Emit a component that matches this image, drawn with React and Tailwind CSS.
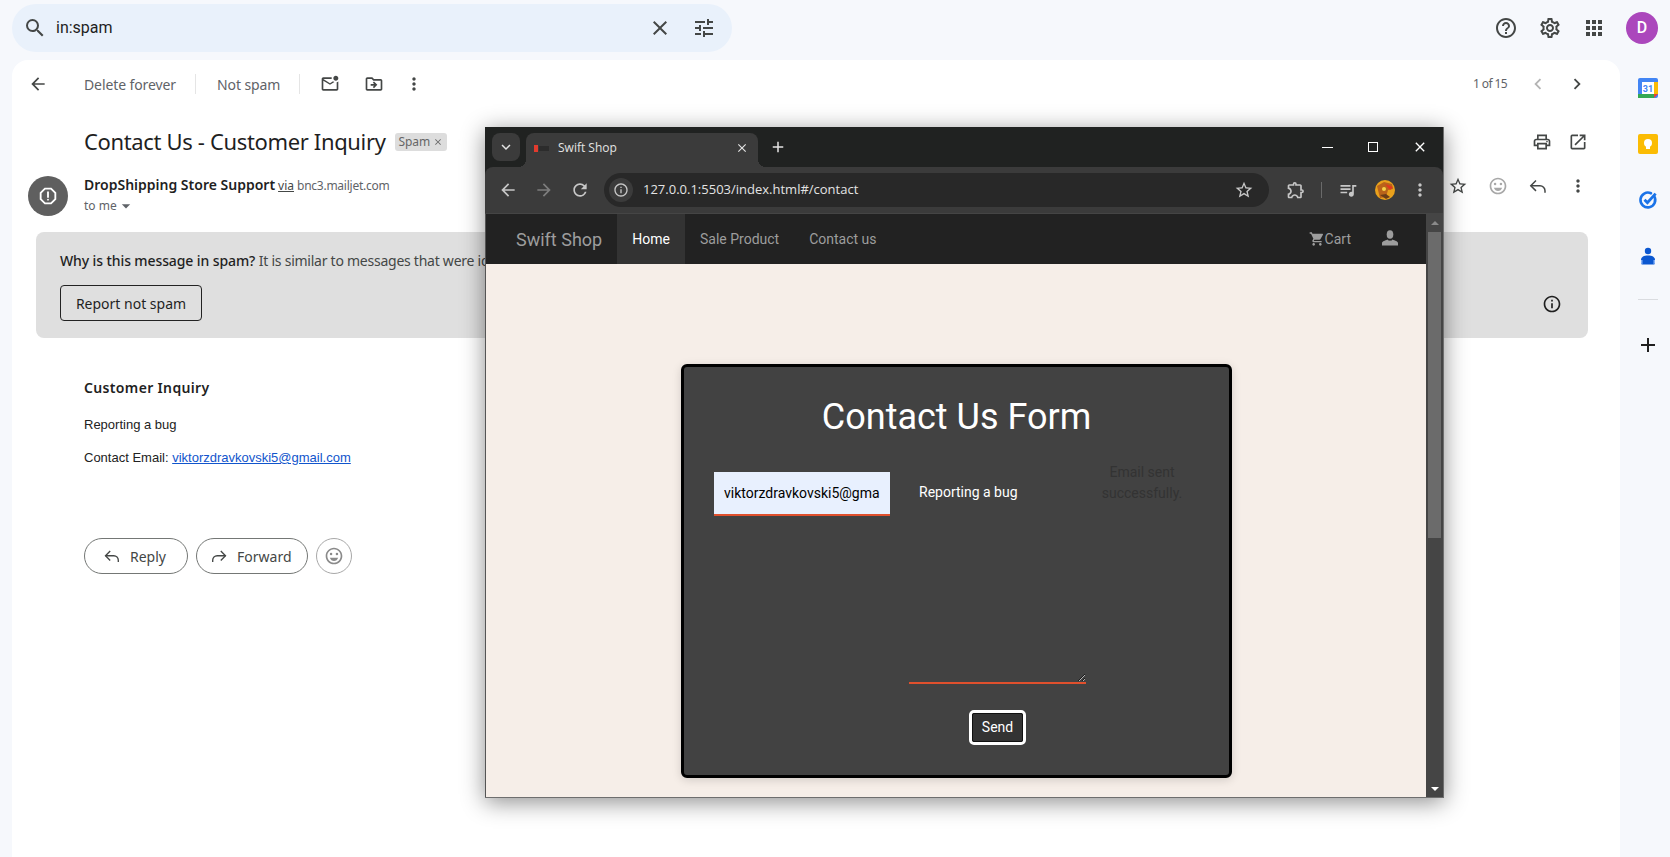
import React from "react";
import {
  MdSearch, MdClose, MdTune, MdHelpOutline, MdOutlineSettings, MdApps, MdArrowBack, MdMoreVert,
  MdOutlineMarkEmailUnread, MdOutlineDriveFileMove, MdOutlinePrint, MdOpenInNew, MdStarBorder,
  MdOutlineEmojiEmotions, MdChevronLeft, MdChevronRight, MdInfoOutline, MdAdd, MdArrowDropDown,
  MdOutlineReport, MdRefresh, MdArrowForward, MdOutlineExtension, MdQueueMusic, MdKeyboardArrowDown,
  MdShoppingCart,
} from "react-icons/md";

function ReplyIcon({ size = 20, className = "" }) {
  return (
    <svg width={size} height={size} viewBox="0 0 20 20" fill="none" stroke="currentColor" strokeWidth="1.5" className={className}>
      <path d="M8 4.500 2.800 9.700 8 14.900" />
      <path d="M2.800 9.700h9.200a5 5 0 0 1 5 5v2" />
    </svg>
  );
}
function UserGlyph() {
  return (
    <svg width="16" height="16" viewBox="0 0 16 16" fill="currentColor" className="ml-[31px] mr-[28px] -mt-[2px]">
      <ellipse cx="8" cy="4.500" rx="3.300" ry="4.300" />
      <path d="M0 15.500v-2.500c0-1.500 3-2.500 5.500-3.500.5.800 1.500 1.200 2.500 1.200s2-.4 2.500-1.200c2.500 1 5.500 2 5.500 3.500v2.500z" />
    </svg>
  );
}
function Calendar() {
  return (
    <svg width="20" height="20" viewBox="0 0 20 20">
      <rect x="0" y="0" width="20" height="20" rx="2" fill="#4285f4" />
      <rect x="4" y="4" width="12" height="12" fill="#fff" />
      <rect x="0" y="16" width="16" height="4" fill="#34a853" />
      <rect x="16" y="4" width="4" height="12" fill="#fbbc04" />
      <path d="M16 16h4l-4 4z" fill="#ea4335" />
      <text x="10" y="13.800" textAnchor="middle" fontSize="9" fontWeight="700" fill="#4285f4" fontFamily="Roboto, sans-serif">31</text>
    </svg>
  );
}
function Keep() {
  return (
    <svg width="20" height="20" viewBox="0 0 20 20">
      <rect width="20" height="20" rx="2" fill="#fbbc04" />
      <circle cx="10" cy="9" r="4" fill="#fff" />
      <rect x="8" y="12" width="4" height="3" fill="#fff" />
    </svg>
  );
}
function Tasks() {
  return (
    <svg width="20" height="20" viewBox="0 0 20 20" fill="none">
      <path d="M16.200 6.200A7.400 7.400 0 1 1 13 3.300" stroke="#1a73e8" strokeWidth="2.600" strokeLinecap="round" />
      <path d="M6.500 9.700 9.400 12.600 17.600 3.600" stroke="#1a73e8" strokeWidth="2.800" />
    </svg>
  );
}
function Contacts() {
  return (
    <svg width="20" height="20" viewBox="0 0 20 20">
      <circle cx="10" cy="5" r="3.200" fill="#0b57d0" />
      <path d="M3 17v-3.200C3 11 6 9.500 10 9.500s7 1.500 7 4.300V17a1.500 1.500 0 0 1-1.500 1.500h-11A1.500 1.500 0 0 1 3 17z" fill="#0b57d0" />
      <path d="M3 14h1.500v4H4a1 1 0 0 1-1-1zM17 14h-1.500v4h.5a1 1 0 0 0 1-1z" fill="#8ab4f8" />
    </svg>
  );
}
function Mascot() {
  return (
    <svg width="20" height="20" viewBox="0 0 20 20" className="block">
      <circle cx="10" cy="10" r="10" fill="#e9a11c" />
      <path d="M2 6 9 2l8 2 1 5-5 1-2 7-6 1z" fill="#b9631a" />
      <path d="M10 4l8 3-3 3z" fill="#e2371f" />
      <circle cx="9" cy="9" r="2" fill="#f7d348" />
      <path d="M5 15l6 4 4-2-4-3z" fill="#6b3d17" />
    </svg>
  );
}

function GmailTopBar() {
  return (
    <header className="h-[60px] shrink-0 flex items-center pl-3 pr-[12px]">
      <div className="w-[720px] h-12 -mt-[4px] rounded-full bg-[#e9f1fb] flex items-center pl-[12px] pr-[16px] text-[#444746]">
        <MdSearch size={24} className="shrink-0 -ml-[1px]" />
        <span className="ml-[9px] text-[16px] text-[#1f1f1f] font-['Roboto',sans-serif]">in:spam</span>
        <MdClose size={24} className="ml-auto" />
        <MdTune size={24} className="ml-[20px]" />
      </div>
      <div className="ml-auto -mt-[4px] flex items-center text-[#444746]">
        <MdHelpOutline size={24} />
        <MdOutlineSettings size={24} className="ml-[20px]" />
        <MdApps size={24} className="ml-[20px]" />
        <div className="ml-[20px] w-8 h-8 rounded-full bg-[#ab47bc] text-white flex items-center justify-center text-[16px] font-medium font-['Roboto',sans-serif]">D</div>
      </div>
    </header>
  );
}

function MessageCard() {
  return (
    <main className="w-[1608px] rounded-t-2xl bg-white text-[#444746] font-['Noto_Sans',sans-serif]">
      <div className="h-12 flex items-center pl-[16px] pr-[32px]">
        <MdArrowBack size={20} className="ml-0 text-[#444746]" />
        <span className="ml-[36px] text-[14px] tracking-[-0.1px] text-[#5f6368]">Delete forever</span>
        <span className="ml-[19px] w-px h-5 bg-[#e5e5e5]" />
        <span className="ml-[21px] text-[14px] tracking-[-0.1px] text-[#5f6368]">Not spam</span>
        <span className="ml-[19px] w-px h-5 bg-[#e5e5e5]" />
        <MdOutlineMarkEmailUnread size={20} className="ml-[20px]" />
        <MdOutlineDriveFileMove size={20} className="ml-[24px]" />
        <MdMoreVert size={20} className="ml-[20px]" />
        <span className="ml-auto text-[12px] tracking-[-0.6px] text-[#5f6368]">1 of 15</span>
        <MdChevronLeft size={22} className="ml-[20px] text-[#b4b4b4]" />
        <MdChevronRight size={22} className="ml-[17px] text-[#444746]" />
      </div>
      <div className="mt-[17px] h-[34px] flex items-center pl-[72px] pr-[32px]">
        <h1 className="-mt-[2px] text-[22px] tracking-[-0.35px] text-[#1f1f1f]">Contact Us - Customer Inquiry</h1>
        <span className="ml-[9px] h-[18px] px-1 rounded-[3px] bg-[#dddddd] flex items-center gap-[3px] text-[12px] tracking-[-0.1px] text-[#666666]">Spam <MdClose size={10} /></span>
        <MdOutlinePrint size={20} className="ml-auto" />
        <MdOpenInNew size={20} className="ml-[16px]" />
      </div>
      <div className="mt-[17px] h-10 flex pl-[16px] pr-[32px]">
        <div className="w-10 h-10 rounded-full bg-[#5f5f5f] text-white flex items-center justify-center">
          <MdOutlineReport size={22} />
        </div>
        <div className="ml-4 flex flex-col">
          <div className="flex items-baseline text-[14px] leading-[20px] -mt-[1px]">
            <span className="font-semibold text-[#1f1f1f]">DropShipping Store Support</span>
            <span className="ml-[3px] text-[12px] underline text-[#444746]">via</span>
            <span className="ml-[3px] text-[12px] tracking-[-0.25px] text-[#5f6368]">bnc3.mailjet.com</span>
          </div>
          <div className="flex items-center text-[12px] leading-[20px] text-[#5f6368]">
            to me <MdArrowDropDown size={20} className="-ml-[1px]" />
          </div>
        </div>
        <div className="ml-auto flex items-start pt-0 text-[#444746]">
          <MdStarBorder size={20} />
          <MdOutlineEmojiEmotions size={20} className="ml-[20px] text-[#a8a8a8]" />
          <ReplyIcon size={20} className="ml-[20px]" />
          <MdMoreVert size={20} className="ml-[20px]" />
        </div>
      </div>
      <section className="relative ml-[24px] mr-[32px] mt-4 h-[106px] rounded-lg bg-[#dfdfdf] pl-[24px] pt-[19px]">
        <p className="text-[14px] leading-5 tracking-[-0.1px] text-[#444746]">
          <span className="font-medium text-[#1f1f1f]">Why is this message in spam?</span> <span className="tracking-[-0.25px]">It is similar to messages that were identified as spam in the past.</span>
        </p>
        <button className="mt-[14px] w-[142px] h-9 rounded-[4px] border border-[#222] text-[14px] text-[#1f1f1f]">Report not spam</button>
        <MdInfoOutline size={20} className="absolute right-[26px] top-[62px] text-[#1f1f1f]" />
      </section>
      <div className="ml-[72px] mt-[38px] text-[#222] font-['Liberation_Sans',sans-serif]">
        <h2 className="text-[14px] leading-6 font-semibold tracking-[0.35px] font-['Noto_Sans',sans-serif] text-[#1f1f1f]">Customer Inquiry</h2>
        <p className="mt-[15px] text-[13px] leading-[20px]">Reporting a bug</p>
        <p className="mt-[13px] text-[13px] leading-[20px]">Contact Email: <a className="text-[#1155cc] underline">viktorzdravkovski5@gmail.com</a></p>
      </div>
      <div className="ml-[72px] mt-[70px] flex gap-2">
        <button className="w-[104px] h-9 rounded-full border border-[#747775] flex items-center pl-[18px] gap-[9px] text-[14px] text-[#444746]"><ReplyIcon size={18} />Reply</button>
        <button className="w-[112px] h-9 rounded-full border border-[#747775] flex items-center pl-[13px] gap-[9px] text-[14px] text-[#444746]"><ReplyIcon size={18} className="-scale-x-100" />Forward</button>
        <button className="w-9 h-9 rounded-full border border-[#a8a8a8] flex items-center justify-center text-[#8a8a8a]"><MdOutlineEmojiEmotions size={20} /></button>
      </div>
    </main>
  );
}

function RightRail() {
  return (
    <aside className="flex-1 flex flex-col items-center pl-[6px] pt-[18px]">
      <Calendar />
      <div className="mt-9"><Keep /></div>
      <div className="mt-9"><Tasks /></div>
      <div className="mt-9"><Contacts /></div>
      <div className="mt-[33px] w-5 h-px bg-[#dadce0]" />
      <MdAdd size={24} className="mt-[33px] text-[#1f1f1f]" />
    </aside>
  );
}

function BrowserChrome() {
  return (
    <>
      <div className="h-10 flex bg-[#202221] pl-[7px] pt-[6px] text-white font-['Open_Sans',sans-serif]">
        <div className="w-7 h-7 rounded-lg bg-[#3b3b3b] flex items-center justify-center text-[#e3e3e3]"><MdKeyboardArrowDown size={18} /></div>
        <div className="relative ml-[6px] w-[232px] h-[34px] rounded-t-lg bg-[#3b3b3b] flex items-center pl-2 pr-[8px] pb-[4px]">
          <span className="absolute -left-2 bottom-0 w-2 h-2 bg-[radial-gradient(circle_at_0_0,transparent_8px,#3b3b3b_8px)]" />
          <span className="absolute -right-2 bottom-0 w-2 h-2 bg-[radial-gradient(circle_at_100%_0,transparent_8px,#3b3b3b_8px)]" />
          <span className="flex items-center w-4 h-4">
            <span className="w-[4px] h-[7px] bg-[#e23b2e]" />
            <span className="ml-px w-[10px] h-[5px] bg-[#2c2c2c]" />
          </span>
          <span className="ml-[8px] text-[12px] text-[#e3e3e3]">Swift Shop</span>
          <MdClose size={14} className="ml-auto mr-[1px] text-[#e3e3e3]" />
        </div>
        <MdAdd size={18} className="ml-[11px] mt-[5px] text-[#e3e3e3]" />
        <div className="ml-auto flex -mt-[6px] h-10 items-center pr-[15px]">
          <span className="w-[11px] h-px bg-white mr-[35px]" />
          <span className="w-[10px] h-[10px] border border-white mr-[34px]" />
          <MdClose size={16} />
        </div>
      </div>
      <div className="h-[47px] bg-[#3b3b3b] rounded-t-lg flex items-center pl-[13px] text-[#c7c7c7] border-b border-[#454545] font-['Open_Sans',sans-serif]">
        <MdArrowBack size={20} />
        <MdArrowForward size={20} className="ml-[16px] text-[#7d7d7d]" />
        <MdRefresh size={20} className="ml-[16px]" />
        <div className="ml-[14px] w-[665px] h-[34px] rounded-full bg-[#282828] flex items-center pl-[5px] pr-[15px]">
          <span className="w-6 h-6 rounded-full bg-[#3b3b3b] flex items-center justify-center"><MdInfoOutline size={16} /></span>
          <span className="ml-[10px] text-[13px] text-[#e3e3e3]">127.0.0.1:5503/index.html#/contact</span>
          <MdStarBorder size={20} className="ml-auto" />
        </div>
        <MdOutlineExtension size={20} className="ml-[17px]" />
        <span className="ml-[15px] w-px h-4 bg-[#6a6a6a]" />
        <MdQueueMusic size={20} className="ml-[16px]" />
        <span className="ml-[17px]"><Mascot /></span>
        <MdMoreVert size={20} className="ml-[15px]" />
      </div>
    </>
  );
}

function ShopNav() {
  return (
    <nav className="h-[50px] shrink-0 bg-[#222222] flex items-center pl-[30px] text-[14px] text-[#9d9d9d]">
      <span className="text-[18px] w-[101px]">Swift Shop</span>
      <span className="h-full w-[68px] bg-[#333333] text-white flex items-center justify-center">Home</span>
      <span className="ml-[15px]">Sale Product</span>
      <span className="ml-[30px]">Contact us</span>
      <span className="ml-auto flex items-center"><MdShoppingCart size={16} />Cart</span>
      <UserGlyph />
    </nav>
  );
}

function ContactForm() {
  return (
    <div className="w-[551px] h-[414px] ml-px rounded-md border-[3px] border-black bg-[#424242] px-[30px] shadow-[0_2px_10px_rgba(0,0,0,0.15)]">
      <h2 className="mt-[28px] text-center text-[36px] leading-[44px] font-normal text-white">Contact Us Form</h2>
      <div className="mt-[33px] flex text-[14px]">
        <input readOnly value="viktorzdravkovski5@gmail.com" className="w-[176px] h-[44px] bg-[#e8f0fe] text-black border-b-2 border-[#e0502d] px-[10px] outline-none" />
        <div className="ml-[19px] flex flex-col items-center w-[177px]">
          <textarea readOnly value="Reporting a bug" className="w-[177px] h-[212px] text-white bg-transparent border-b-2 border-[#e0502d] px-[10px] py-[10px] outline-none" />
          <button className="mt-[26px] w-[57px] h-[35px] pb-px rounded-[5px] border-[3px] border-white outline outline-1 outline-[#111] -outline-offset-[4px] bg-[#333333] text-white">Send</button>
        </div>
        <p className="ml-[12px] w-[88px] -mt-[10px] text-center leading-[21px] text-[#333333]">Email sent successfully.</p>
      </div>
    </div>
  );
}

function BrowserWindow() {
  return (
    <div className="absolute left-[485px] top-[127px] w-[959px] h-[671px] flex flex-col bg-[#202221] shadow-[0_4px_22px_rgba(0,0,0,0.45)] border-b border-r border-[#6e6e6e]">
      <BrowserChrome />
      <div className="flex-1 min-h-0 flex font-['Roboto',sans-serif]">
        <div className="flex-1 flex flex-col min-w-0 border-l border-[#555]">
          <ShopNav />
          <div className="flex-1 bg-[#f6eee8] pt-[100px] flex justify-center">
            <ContactForm />
          </div>
        </div>
        <div className="w-[17px] bg-[#454545] flex flex-col items-center">
          <span className="mt-[7px] w-0 h-0 border-x-[4px] border-x-transparent border-b-[4px] border-b-[#8a8a8a]" />
          <span className="mt-[7px] w-[13px] h-[306px] bg-[#6b6b6b]" />
          <span className="mt-auto mb-[6px] w-0 h-0 border-x-[4px] border-x-transparent border-t-[4px] border-t-white" />
        </div>
      </div>
    </div>
  );
}

export default function App() {
  return (
    <div className="relative w-[1670px] h-[857px] overflow-hidden bg-[#f6f8fc] flex flex-col">
      <GmailTopBar />
      <div className="flex-1 min-h-0 flex pl-3">
        <MessageCard />
        <RightRail />
      </div>
      <BrowserWindow />
    </div>
  );
}
